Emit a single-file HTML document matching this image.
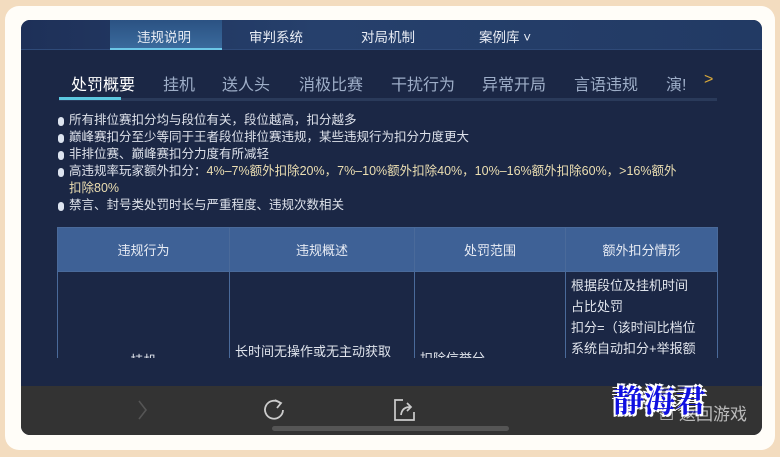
<!DOCTYPE html>
<html><head><meta charset="utf-8"><style>
*{margin:0;padding:0;box-sizing:border-box}
body{width:780px;height:457px;overflow:hidden;background:#f3dcbf;font-family:"Liberation Sans","Noto Sans CJK SC",sans-serif;position:relative}
.frame{position:absolute;left:5px;top:6px;width:770px;height:444px;background:#fffdf8;border-radius:14px}
.panel{position:absolute;left:21px;top:20px;width:741px;height:415px;border-radius:9px;overflow:hidden;background:#1b2745}
.nav{position:absolute;left:0;top:0;width:741px;height:30px;background:linear-gradient(90deg,#1e3058,#26406c 40%,#223a64);border-bottom:1px solid #2f4a78}
.nav span{position:absolute;top:6px;font-size:13.5px;color:#e8ecf4}
.act{position:absolute;left:89px;top:0;width:112px;height:30px;background:linear-gradient(#2b5283,#3a6a9c);border-bottom:2px solid #6cc8e8}
.sub span{position:absolute;top:51px;font-size:16px;color:#9eaec8}
.subline{position:absolute;left:38px;top:78px;width:658px;height:3px;background:#2a3a5a}
.subact{position:absolute;left:38px;top:77px;width:62px;height:3px;background:#5cc8e0}
ul{position:absolute;left:36px;top:92px;list-style:none;font-size:12.5px;color:#dde1ea;line-height:17px}
li{padding-left:12px;position:relative}
li:before{content:"";position:absolute;left:1px;top:5px;width:6px;height:9px;background:#dde4f0;border-radius:3px}
li.y{color:#ecdfb2}
.clip{position:absolute;left:36px;top:207px;width:670px;height:131px;overflow:hidden}
table{border-collapse:collapse;font-size:13px;color:#e0e4ec;table-layout:fixed}
td,th{border:1px solid #4a6a9a}
th{background:#3e6196;height:44px;font-weight:normal;color:#e8ecf4}
td{height:140px;vertical-align:top}
.bar{position:absolute;left:0;top:366px;width:741px;height:49px;background:#333}
.home{position:absolute;left:251px;top:406px;width:237px;height:5px;border-radius:3px;background:#555}
</style></head><body>
<div class="frame"></div>
<div class="panel">
<div class="nav"><div class="act"></div>
<span style="left:116px">违规说明</span><span style="left:228px">审判系统</span><span style="left:340px">对局机制</span><span style="left:458px">案例库 ˅</span></div>
<div class="sub">
<span style="left:50px;color:#fff">处罚概要</span><span style="left:142px">挂机</span><span style="left:201px">送人头</span><span style="left:278px">消极比赛</span><span style="left:370px">干扰行为</span><span style="left:461px">异常开局</span><span style="left:553px">言语违规</span><span style="left:645px">演!</span><span style="left:683px;color:#d8a83a">&gt;</span>
</div>
<div class="subline"></div><div class="subact"></div>
<ul>
<li>所有排位赛扣分均与段位有关，段位越高，扣分越多</li>
<li>巅峰赛扣分至少等同于王者段位排位赛违规，某些违规行为扣分力度更大</li>
<li>非排位赛、巅峰赛扣分力度有所减轻</li>
<li class="y"><span style="color:#dde1ea">高违规率玩家额外扣分：</span>4%–7%额外扣除20%，7%–10%额外扣除40%，10%–16%额外扣除60%，&gt;16%额外<br>扣除80%</li>
<li>禁言、封号类处罚时长与严重程度、违规次数相关</li>
</ul>
<div class="clip">
<table>
<tr><th style="width:172px">违规行为</th><th style="width:185px">违规概述</th><th style="width:151px">处罚范围</th><th style="width:152px">额外扣分情形</th></tr>
<tr><td style="padding-top:78px;text-align:center">挂机</td><td style="padding:69px 0 0 5px">长时间无操作或无主动获取</td><td style="padding:76px 0 0 5px">扣除信誉分</td><td style="padding:3px 12px 0 5px;line-height:21px">根据段位及挂机时间<br>占比处罚<br>扣分=（该时间比档位<br>系统自动扣分+举报额</td></tr>
</table>
</div>
<div class="bar">
<svg style="position:absolute;left:115px;top:12px" width="14" height="24"><path d="M3 3 L10 12 L3 21" stroke="#555" stroke-width="1.6" fill="none"/></svg>
<svg style="position:absolute;left:240px;top:11px" width="26" height="26"><path d="M19 6 A9 9 0 1 0 22 13" stroke="#ccc" stroke-width="1.8" fill="none"/><path d="M14 3 L20 6 L16 11" stroke="#ccc" stroke-width="1.8" fill="none"/></svg>
<svg style="position:absolute;left:372px;top:12px" width="24" height="24"><path d="M10 2 H2 V22 H21 V14" stroke="#ccc" stroke-width="1.7" fill="none"/><path d="M8 17 Q9 9 17 9 M14 5 L18 9 L14 13" stroke="#ccc" stroke-width="1.7" fill="none"/></svg>
<div style="position:absolute;left:638px;top:14px;font-size:17px;color:#bbb">☐ 返回游戏</div>
<div style="position:absolute;left:592px;top:-10px;font-size:31px;font-weight:bold;color:#1010e0;text-shadow:-2px -2px 0 #fff,2px 2px 0 #fff,2px -2px 0 #fff,-2px 2px 0 #fff;font-family:'Noto Serif CJK SC',serif">静海君</div>
</div>
<div class="home"></div>
</div>
</body></html>
